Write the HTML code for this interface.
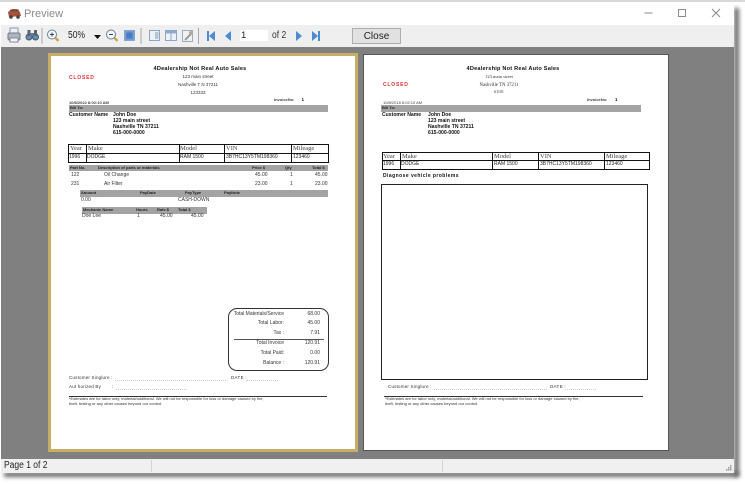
<!DOCTYPE html>
<html><head><meta charset="utf-8"><style>
html,body{margin:0;padding:0;width:745px;height:484px;overflow:hidden;background:#fff;font-family:"Liberation Sans",sans-serif}
div,span{position:absolute;white-space:nowrap}
.t{line-height:0;color:#333;font-size:5px}
.b{font-weight:bold;color:#111}
.s{font-family:"Liberation Serif",serif;color:#444;font-size:6.5px}
.h{font-weight:bold;font-size:4px;color:#222;line-height:0}
.g{background:#a3a3a3}
.l{background:#111}
.r{text-align:right}
.c{font-size:5.100px}
.x{transform:scaleX(.85);transform-origin:0 50%}
#doc{filter:blur(.3px)}
</style></head><body>
<div style="left:0;top:0;width:745px;height:2px;background:#d8d8d8"></div>
<div style="left:4px;top:472px;width:735px;height:5px;background:#666;filter:blur(2px)"></div>
<div style="left:734px;top:8px;width:5px;height:468px;background:#666;filter:blur(2px)"></div>
<div style="left:1px;top:2px;width:733px;height:471px;background:#fff;overflow:hidden">
 <div style="left:0;top:23px;width:733px;height:22px;background:#efefef"></div>
 <div style="left:0;top:45px;width:733px;height:412px;background:#808080"></div>
 <div style="left:0;top:457px;width:733px;height:14px;background:#f0f0f0"></div>
</div>
<!-- title -->
<svg style="position:absolute;left:7px;top:7px;filter:blur(.3px)" width="15" height="13" viewBox="0 0 15 13"><path d="M1 5 L5 2 L10 2 L13 5 L14 9 L2 10 Z" fill="#a5523c"/><path d="M3 3 L8 4 L12 3" stroke="#5d4a40" fill="none"/><circle cx="4" cy="10" r="1.800" fill="#444"/><circle cx="11" cy="10" r="1.800" fill="#444"/></svg>
<span class="t" style="left:24px;top:13.500px;font-size:11px;color:#8a8a8a">Preview</span>
<svg style="position:absolute;left:600px;top:0" width="140" height="26" fill="none" stroke="#8a8a8a"><path d="M44.500 13H52.500"/><rect x="78.500" y="9.500" width="7" height="7"/><path d="M112 9L120 17M120 9L112 17"/></svg>
<!-- toolbar -->
<svg style="position:absolute;left:0;top:25px;filter:blur(.35px)" width="420" height="22">
 <g>
  <rect x="10" y="3" width="8" height="6" fill="#eef" stroke="#89a"/>
  <rect x="8" y="8" width="12" height="7" rx="1.500" fill="#aab6c2" stroke="#778"/>
  <rect x="10" y="13" width="8" height="4" fill="#f4f4f4" stroke="#889"/>
  <circle cx="29" cy="12" r="3" fill="#6a8db5" stroke="#456"/><circle cx="35.500" cy="12" r="3" fill="#6a8db5" stroke="#456"/>
  <rect x="27.500" y="5" width="3" height="6" fill="#567"/><rect x="34" y="5" width="3" height="6" fill="#567"/><rect x="30" y="8" width="4" height="3" fill="#678"/>
  <rect x="41.500" y="3" width="1" height="16" fill="#a8a8a8"/>
  <circle cx="52" cy="9.500" r="4.500" fill="#f2f6fa" stroke="#6f8193"/><path d="M50 9.500H54M52 7.500V11.500" stroke="#345"/><path d="M55.500 13L58.500 16" stroke="#c9a84a" stroke-width="2.500"/>
  <path d="M94 10H101L97.500 14Z" fill="#111"/>
  <circle cx="111" cy="9.500" r="4.500" fill="#f2f6fa" stroke="#6f8193"/><path d="M109 9.500H113" stroke="#345"/><path d="M114.500 13L117.500 16" stroke="#c9a84a" stroke-width="2.500"/>
  <rect x="124.500" y="5.500" width="10" height="10" fill="#6f9bd6" stroke="#8da5c5"/><rect x="126.500" y="7.500" width="6" height="6" fill="#4a7cc2"/>
  <rect x="140.500" y="3" width="1" height="16" fill="#a8a8a8"/>
  <rect x="149.500" y="5.500" width="10" height="10" fill="#eef2f7" stroke="#8da5c5"/><rect x="155" y="7" width="3.500" height="7" fill="#b8c4d2"/>
  <rect x="165.500" y="5.500" width="11" height="10" fill="#eef2f7" stroke="#8da5c5"/><rect x="166" y="6" width="10" height="2.500" fill="#8dacd4"/><path d="M171 8.500V15" stroke="#8da5c5"/>
  <rect x="182.500" y="5.500" width="10" height="11" fill="#eef2f7" stroke="#9dadc5"/><path d="M185 15L192 8" stroke="#a09a90" stroke-width="2"/><circle cx="191" cy="8" r="2" fill="#b0a898"/>
  <rect x="198" y="3" width="1" height="16" fill="#a8a8a8"/>
  <g fill="#4d8ad4"><rect x="207" y="6" width="2" height="10"/><path d="M215 6V16L209 11Z"/><path d="M231 6V16L225 11Z"/><path d="M296 6V16L302 11Z"/><path d="M312 6V16L318 11Z"/><rect x="318" y="6" width="2" height="10"/></g>
 </g>
</svg>
<span class="t x" style="left:68px;top:36px;font-size:10px;color:#222">50%</span>
<div style="left:240px;top:30px;width:28px;height:11px;background:#fff"></div>
<span class="t" style="left:241px;top:35.500px;font-size:9.500px;color:#222">1</span>
<span class="t x" style="left:272px;top:35.500px;font-size:10px;color:#333">of 2</span>
<div style="left:352px;top:28px;width:47px;height:14px;background:#e1e1e1;border:1px solid #adadad;text-align:center;font-size:10px;line-height:15px;color:#222">Close</div>
<!-- status -->
<span class="t x" style="left:4px;top:466px;font-size:10px;color:#222">Page 1 of 2</span>
<div style="left:151px;top:460px;width:1px;height:12px;background:#d4d4d4"></div>
<div style="left:442px;top:460px;width:1px;height:12px;background:#d4d4d4"></div>
<svg style="position:absolute;left:725px;top:464px" width="8" height="8" fill="#999"><rect x="5" y="1" width="1.500" height="1.500"/><rect x="3" y="3" width="1.500" height="1.500"/><rect x="5" y="3" width="1.500" height="1.500"/><rect x="1" y="5" width="1.500" height="1.500"/><rect x="3" y="5" width="1.500" height="1.500"/><rect x="5" y="5" width="1.500" height="1.500"/></svg>

<div id="doc" style="left:0;top:0;width:745px;height:484px">
<!-- PAGE 1 -->
<div style="left:48px;top:53px;width:304px;height:393px;background:#fff;border:3px solid #c8ad65"></div>
<span class="t b" style="left:153px;top:69px;font-size:5.600px;letter-spacing:.22px;width:94px;text-align:center">4Dealership Not Real Auto Sales</span>
<span class="t b" style="left:69px;top:78px;color:#e03030;font-size:5px;letter-spacing:.8px">CLOSED</span>
<span class="t" style="left:160px;top:77px;width:76px;text-align:center;font-size:4.500px">123 main street</span>
<span class="t" style="left:160px;top:85px;width:76px;text-align:center;font-size:4.500px">Nashville T N 37211</span>
<span class="t" style="left:160px;top:93px;width:76px;text-align:center;font-size:4.500px">123333</span>
<span class="t" style="left:274px;top:100px;font-size:4px;font-weight:bold;color:#444">InvoiceNo:</span>
<span class="t b" style="left:301.500px;top:100px;font-size:4.500px">1</span>
<span class="t" style="left:69px;top:102.500px;font-size:4px;font-weight:bold;color:#444">10/8/2022 8:02:10 AM</span>
<div class="g" style="left:69px;top:105px;width:259px;height:7px"></div>
<span class="h" style="left:70px;top:107.500px">Bill To:</span>
<span class="t b c" style="left:69px;top:115px">Customer Name</span>
<span class="t b c" style="left:113px;top:115px">John Doe</span>
<span class="t b c" style="left:113px;top:120.500px">123 main street</span>
<span class="t b c" style="left:113px;top:126.500px">Nashville TN 37211</span>
<span class="t b c" style="left:113px;top:132.500px">615-000-0000</span>
<div class="l" style="left:68px;top:144px;width:261px;height:1px"></div>
<div class="l" style="left:68px;top:153px;width:261px;height:1px"></div>
<div class="l" style="left:68px;top:162px;width:261px;height:1px"></div>
<div class="l" style="left:68px;top:144px;width:1px;height:19px"></div>
<div class="l" style="left:86px;top:144px;width:1px;height:19px"></div>
<div class="l" style="left:179px;top:144px;width:1px;height:19px"></div>
<div class="l" style="left:224px;top:144px;width:1px;height:19px"></div>
<div class="l" style="left:291px;top:144px;width:1px;height:19px"></div>
<div class="l" style="left:328px;top:144px;width:1px;height:19px"></div>
<span class="t s" style="left:70px;top:149px">Year</span><span class="t s" style="left:88px;top:149px">Make</span><span class="t s" style="left:180px;top:149px">Model</span><span class="t s" style="left:226px;top:149px">VIN</span><span class="t s" style="left:293px;top:149px">Mileage</span>
<span class="t" style="left:69px;top:156.500px;color:#222">1996</span><span class="t" style="left:87px;top:156.500px;color:#222">DODGE</span><span class="t" style="left:180px;top:156.500px;color:#222">RAM 1500</span><span class="t" style="left:226px;top:156.500px;color:#222">3B7HC13Y5TM198360</span><span class="t" style="left:293px;top:156.500px;color:#222">123460</span>
<div class="g" style="left:69px;top:165px;width:259px;height:6px"></div>
<span class="h" style="left:70px;top:167.500px">Part No.</span><span class="h" style="left:98px;top:167.500px">Description of parts or materials</span><span class="h" style="left:252px;top:167.500px">Price $</span><span class="h" style="left:285px;top:167.500px">Qty</span><span class="h" style="left:312px;top:167.500px">Total $</span>
<span class="t" style="left:71px;top:174.500px">122</span><span class="t" style="left:104px;top:174.500px">Oil Change</span><span class="t" style="left:255px;top:174.500px">45.00</span><span class="t" style="left:290px;top:174.500px">1</span><span class="t" style="left:315px;top:174.500px">45.00</span>
<span class="t" style="left:71px;top:183.500px">231</span><span class="t" style="left:104px;top:183.500px">Air Filter</span><span class="t" style="left:255px;top:183.500px">23.00</span><span class="t" style="left:290px;top:183.500px">1</span><span class="t" style="left:315px;top:183.500px">23.00</span>
<div class="g" style="left:80px;top:190px;width:248px;height:7px"></div>
<span class="h" style="left:81px;top:192.500px">Amount</span><span class="h" style="left:140px;top:192.500px">PayDate</span><span class="h" style="left:185px;top:192.500px">PayType</span><span class="h" style="left:224px;top:192.500px">PayNote</span>
<span class="t" style="left:81px;top:200px">0.00</span><span class="t" style="left:178px;top:200px">CASH-DOWN</span>
<div class="g" style="left:82px;top:207px;width:125px;height:6.500px"></div>
<span class="h" style="left:83px;top:209.500px">Mechanic Name</span><span class="h" style="left:136px;top:209.500px">Hours</span><span class="h" style="left:157px;top:209.500px">Rate $</span><span class="h" style="left:178px;top:209.500px">Total $</span>
<span class="t" style="left:82px;top:216px">Doe Lee</span><span class="t" style="left:137px;top:216px">1</span><span class="t" style="left:160px;top:216px">45.00</span><span class="t" style="left:191px;top:216px">45.00</span>
<!-- totals -->
<div style="left:228px;top:308px;width:99px;height:61px;border:1px solid #333;border-radius:9px"></div>
<div style="left:234px;top:338.500px;width:90px;height:1px;background:#555"></div>
<span class="t r" style="left:220px;top:313.500px;width:64px">Total Materials/Service</span><span class="t r" style="left:290px;top:313.500px;width:30px">68.00</span>
<span class="t r" style="left:220px;top:323px;width:64px">Total Labor:</span><span class="t r" style="left:290px;top:323px;width:30px">45.00</span>
<span class="t r" style="left:220px;top:333px;width:64px">Tax :</span><span class="t r" style="left:290px;top:333px;width:30px">7.91</span>
<span class="t r" style="left:220px;top:343px;width:64px">Total Invoice</span><span class="t r" style="left:290px;top:343px;width:30px">120.91</span>
<span class="t r" style="left:220px;top:352.500px;width:64px">Total Paid:</span><span class="t r" style="left:290px;top:352.500px;width:30px">0.00</span>
<span class="t r" style="left:220px;top:362.500px;width:64px">Balance :</span><span class="t r" style="left:290px;top:362.500px;width:30px">120.91</span>
<!-- sig -->
<span class="t" style="left:69px;top:377.500px;font-size:4.500px;letter-spacing:.2px">Customer Singlure :</span>
<div style="left:115px;top:379.500px;width:111px;height:0;border-top:1px dotted #ccc"></div>
<span class="t" style="left:231px;top:377.500px;font-size:4.500px;letter-spacing:.3px">DATE :</span>
<div style="left:246px;top:379.500px;width:32px;height:0;border-top:1px dotted #ccc"></div>
<span class="t" style="left:69px;top:386.500px;font-size:4.500px;letter-spacing:.2px">Aut horized By</span>
<span class="t" style="left:112px;top:386.500px;font-size:4.500px">:</span>
<div style="left:116px;top:388.500px;width:71px;height:0;border-top:1px dotted #ccc"></div>
<div style="left:69px;top:396px;width:258px;height:1px;background:#333"></div>
<span class="t" style="left:69px;top:399px;font-size:4px">*Estimates are for labor only, material/additional. We will not be responsible for loss or damage caused by fire,</span>
<span class="t" style="left:69px;top:404px;font-size:4px">theft, testing or any other causes beyond our control.</span>

<!-- PAGE 2 -->
<div style="left:363px;top:54px;width:304px;height:395px;background:#fff;border:1px solid #555"></div>
<span class="t b" style="left:466px;top:69px;font-size:5.600px;letter-spacing:.22px;width:94px;text-align:center">4Dealership Not Real Auto Sales</span>
<span class="t b" style="left:383px;top:85px;color:#e03030;font-size:5px;letter-spacing:.8px">CLOSED</span>
<span class="t" style="left:461px;top:77px;width:76px;text-align:center;font-size:4.500px;font-family:'Liberation Serif',serif">123 main street</span>
<span class="t" style="left:461px;top:85.500px;width:76px;text-align:center;font-size:4.800px;font-family:'Liberation Serif',serif">Nashville TN 37211</span>
<span class="t" style="left:461px;top:91.500px;width:76px;text-align:center;font-size:4px;font-family:'Liberation Serif',serif">61101</span>
<span class="t" style="left:587px;top:100px;font-size:4px;font-weight:bold;color:#444">InvoiceNo:</span>
<span class="t b" style="left:615px;top:100px;font-size:4.500px">1</span>
<span class="t" style="left:383px;top:103px;font-size:4px;color:#444">10/8/2018 8:02:10 AM</span>
<div class="g" style="left:381px;top:105px;width:260px;height:7px"></div>
<span class="h" style="left:382px;top:107.500px">Bill To:</span>
<span class="t b c" style="left:382px;top:115px">Customer Name</span>
<span class="t b c" style="left:428px;top:115px">John Doe</span>
<span class="t b c" style="left:428px;top:120.500px">123 main street</span>
<span class="t b c" style="left:428px;top:126.500px">Nashville TN 37211</span>
<span class="t b c" style="left:428px;top:132.500px">615-000-0000</span>
<div class="l" style="left:382px;top:152px;width:268px;height:1px"></div>
<div class="l" style="left:382px;top:160px;width:268px;height:1px"></div>
<div class="l" style="left:382px;top:168.500px;width:268px;height:1px"></div>
<div class="l" style="left:382px;top:152px;width:1px;height:17px"></div>
<div class="l" style="left:400px;top:152px;width:1px;height:17px"></div>
<div class="l" style="left:492px;top:152px;width:1px;height:17px"></div>
<div class="l" style="left:538px;top:152px;width:1px;height:17px"></div>
<div class="l" style="left:604px;top:152px;width:1px;height:17px"></div>
<div class="l" style="left:649px;top:152px;width:1px;height:17px"></div>
<span class="t s" style="left:383px;top:156.500px">Year</span><span class="t s" style="left:402px;top:156.500px">Make</span><span class="t s" style="left:494px;top:156.500px">Model</span><span class="t s" style="left:540px;top:156.500px">VIN</span><span class="t s" style="left:606px;top:156.500px">Mileage</span>
<span class="t" style="left:383px;top:163.500px;color:#222">1996</span><span class="t" style="left:401px;top:163.500px;color:#222">DODGE</span><span class="t" style="left:494px;top:163.500px;color:#222">RAM 1500</span><span class="t" style="left:540px;top:163.500px;color:#222">3B7HC13Y5TM198360</span><span class="t" style="left:606px;top:163.500px;color:#222">123460</span>
<span class="t b" style="left:383px;top:176px;font-size:5px;letter-spacing:.45px">Diagnose vehicle problems</span>
<div style="left:381px;top:184px;width:265px;height:194px;border:1px solid #222"></div>
<span class="t" style="left:388px;top:387px;font-size:4.500px;letter-spacing:.2px">Customer Singlure :</span>
<div style="left:434px;top:389px;width:113px;height:0;border-top:1px dotted #ccc"></div>
<span class="t" style="left:550px;top:387px;font-size:4.500px;letter-spacing:.3px">DATE :</span>
<div style="left:565px;top:389px;width:31px;height:0;border-top:1px dotted #ccc"></div>
<div style="left:384px;top:396px;width:259px;height:1px;background:#333"></div>
<span class="t" style="left:385px;top:399px;font-size:4px">*Estimates are for labor only, material/additional. We will not be responsible for loss or damage caused by fire,</span>
<span class="t" style="left:385px;top:404px;font-size:4px">theft, testing or any other causes beyond our control.</span>
</div>
</body></html>
